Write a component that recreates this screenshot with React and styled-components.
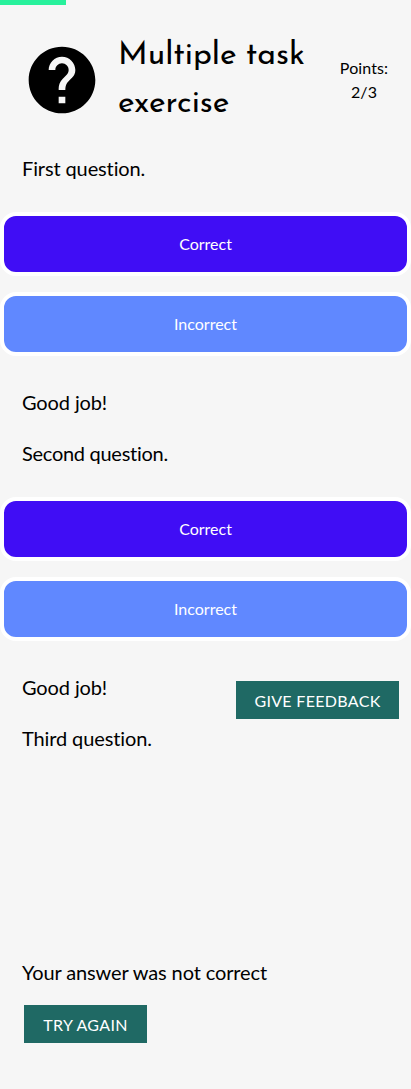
import React from "react";
import styled, { createGlobalStyle } from "styled-components";

const GlobalStyle = createGlobalStyle`
  * { box-sizing: border-box; }
  body {
    margin: 0;
    background: #f6f6f6;
    color: #000;
    font-family: Lato, "Liberation Sans", sans-serif;
    font-variant-ligatures: none;
  }
`;

const Page = styled.main`
  position: relative;
  height: 1089px;
  overflow: hidden;
`;

const Progress = styled.div`
  width: 66px;
  height: 5px;
  background: #28f19c;
`;

const Header = styled.header`
  display: flex;
  align-items: center;
  height: 96px;
  margin: 27px 22px 15px;
`;

const HelpIcon = styled.svg`
  width: 80px;
  height: 80px;
  flex: none;
  fill: #000;
`;

const Title = styled.h1`
  flex: 1;
  margin: 0 0 0 16px;
  font-family: "Josefin Sans", Lato, sans-serif;
  font-size: 32px;
  font-weight: 400;
  line-height: 48px;
  word-spacing: -1px;
`;

const Points = styled.div`
  width: 50px;
  flex: none;
  font-size: 16px;
  line-height: 24px;
  letter-spacing: 0.1px;
  text-align: center;
  white-space: nowrap;
`;

const Text = styled.p`
  margin: 0;
  padding: 8px 22px;
  font-size: 20px;
  line-height: 35px;
  letter-spacing: ${({ $tracking = -0.12 }) => $tracking}px;
`;

const Options = styled.div`
  display: flex;
  flex-direction: column;
  gap: 16px;
  padding: 18px 0 21px;
`;

const Option = styled.button`
  height: 64px;
  border: 4px solid #fff;
  border-radius: 16px;
  background: ${({ $selected }) => ($selected ? "#400df5" : "#6088ff")};
  color: #fff;
  font: 400 16px/24px Lato, sans-serif;
`;

const EmptyTask = styled.div`
  height: 183px;
`;

const ActionButton = styled.button`
  display: block;
  width: ${({ $width }) => $width}px;
  height: 38px;
  padding: 2px 0 0;
  border: 0;
  background: #1f6964;
  color: #fff;
  font: 400 16px/24px Lato, sans-serif;
  letter-spacing: 0.32px;
  text-transform: uppercase;
  white-space: nowrap;
`;

const Retry = styled.div`
  padding: 7px 24px;
`;

const FeedbackOverlay = styled.div`
  position: absolute;
  top: 681px;
  right: 12px;
`;

const Choices = () => (
  <Options>
    <Option $selected>Correct</Option>
    <Option>Incorrect</Option>
  </Options>
);

export default function App() {
  return (
    <Page>
      <GlobalStyle />
      <Progress />
      <Header>
        <HelpIcon viewBox="0 0 24 24" aria-hidden="true">
          <path d="M12 2C6.48 2 2 6.48 2 12s4.48 10 10 10 10-4.48 10-10S17.52 2 12 2zm1 17h-2v-2h2v2zm2.07-7.75l-.9.92C13.45 12.9 13 13.5 13 15h-2v-.5c0-1.1.45-2.1 1.17-2.83l1.24-1.26c.37-.36.59-.86.59-1.41 0-1.1-.9-2-2-2s-2 .9-2 2H8c0-2.21 1.79-4 4-4s4 1.79 4 4c0 .88-.36 1.68-.93 2.25z" />
        </HelpIcon>
        <Title>Multiple task exercise</Title>
        <Points>
          Points:
          <br />
          2/3
        </Points>
      </Header>
      <Text>First question.</Text>
      <Choices />
      <Text>Good job!</Text>
      <Text $tracking={-0.28}>Second question.</Text>
      <Choices />
      <Text>Good job!</Text>
      <Text>Third question.</Text>
      <EmptyTask />
      <Text>Your answer was not correct</Text>
      <Retry>
        <ActionButton $width={123}>Try again</ActionButton>
      </Retry>
      <FeedbackOverlay>
        <ActionButton $width={163}>Give feedback</ActionButton>
      </FeedbackOverlay>
    </Page>
  );
}
